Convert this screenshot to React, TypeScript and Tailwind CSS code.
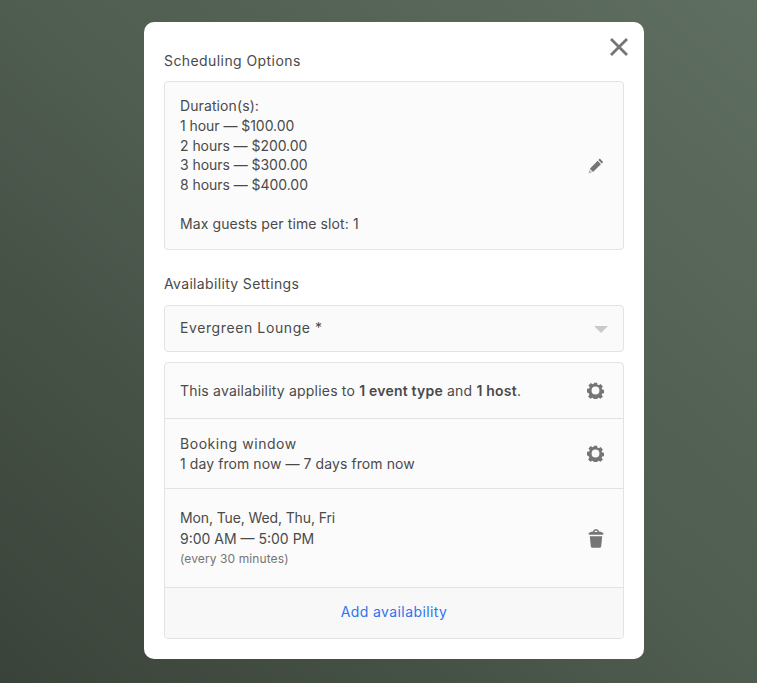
const font = { fontFamily: '"Inter", "Liberation Sans", sans-serif' };

function Gear() {
  return (
    <svg viewBox="-1 -1 26 26" className="w-[17px] h-[17px] text-[#757575]" fill="currentColor">
      <path
        fillRule="evenodd"
        d="M9.500 0h5l.6 3.300 1.900.8 2.800-1.900 3.500 3.500-1.900 2.800.8 1.900 3.300.6v5l-3.300.6-.8 1.900 1.900 2.800-3.500 3.500-2.800-1.900-1.900.8-.6 3.300h-5l-.6-3.300-1.900-.8-2.800 1.900-3.500-3.500 1.900-2.800-.8-1.900L-1 14.500v-5l3.300-.6.8-1.900-1.900-2.800 3.500-3.500 2.800 1.900 1.900-.8L9.500 0zM12 6a6 6 0 1 0 0 12 6 6 0 0 0 0-12z"
      />
    </svg>
  );
}

function Pencil() {
  return (
    <svg viewBox="0 0 16 16" className="w-4 h-4 text-[#757575]" fill="currentColor">
      <path d="M11.800 0.600 15.200 3.900 13.700 5.400 10.400 2z" />
      <path d="M9.700 2.800 12.900 6.200 5 14 1.800 10.800z" />
      <path d="M1.300 11.600 4.200 14.600 0.500 15.600z" fill="#bdbdbd" />
    </svg>
  );
}

function Trash() {
  return (
    <svg viewBox="0 0 16 19" className="w-4 h-[19px] text-[#757575]" fill="currentColor">
      <path d="M0.500 4.800C0.500 3.500 3 2.700 5 2.400 5.400 0.900 6.500 0.300 8 0.300s2.600.6 3 2.100c2 .3 4.500 1.100 4.500 2.400 0 .6-.5 .9-1 .9H1.500c-.5 0-1-.3-1-.9z" />
      <path d="M6 3 8 1.600 10 3z" fill="#fff" />
      <path d="M1.800 7.200h12.400l-1 10c-.1 1-1.200 1.600-2.300 1.600H5.100c-1.100 0-2.200-.6-2.300-1.600z" />
    </svg>
  );
}

function Row({ children, icon, className }: { children: React.ReactNode; icon: React.ReactNode; className: string }) {
  return (
    <div className={`flex items-center justify-between pl-[15px] border-b border-[#e3e3e3] ${className}`}>
      <div>{children}</div>
      {icon}
    </div>
  );
}

export default function App() {
  return (
    <div
      style={font}
      className="w-[757px] h-[683px] overflow-hidden flex pl-[144px] pt-[22px] bg-gradient-to-tr from-[#3a4339] via-[#4f5c50] to-[#5e6e60] text-[14px] text-[#4a4a4a]"
    >
      <div className="relative w-[500px] h-[637px] bg-white rounded-[10px] px-5 pt-[29px]">
        <button className="absolute top-[16px] right-[16px] text-[#757575]">
          <svg viewBox="0 0 18 18" className="w-[18px] h-[18px] block" fill="none" stroke="currentColor" strokeWidth="2.800">
            <path d="M1 1l16 16M17 1L1 17" />
          </svg>
        </button>

        <h2 className="text-[14px] leading-[20px] font-normal tracking-[0.42px]">Scheduling Options</h2>

        <div className="mt-[10px] h-[169px] bg-[#fbfbfb] border border-[#e3e3e3] rounded-[4px] flex items-center justify-between pl-[15px] pr-[19px] leading-[19.600px]">
          <div className="-mt-[1px]">
            <div className="tracking-[0.1px]">Duration(s):</div>
            <div className="tracking-[-0.05px]">1 hour — $100.00</div>
            <div className="tracking-[-0.05px]">2 hours — $200.00</div>
            <div className="tracking-[-0.05px]">3 hours — $300.00</div>
            <div className="tracking-[-0.05px]">8 hours — $400.00</div>
            <div className="mt-[19.600px] tracking-[0.1px]">Max guests per time slot: 1</div>
          </div>
          <Pencil />
        </div>

        <h2 className="mt-6 text-[14px] leading-[20px] font-normal tracking-[0.34px]">Availability Settings</h2>

        <div className="mt-[11px] h-[47px] bg-[#fafafa] border border-[#e3e3e3] rounded-[4px] flex items-center justify-between px-[15px]">
          <span className="tracking-[0.6px] -mt-[2px]">Evergreen Lounge *</span>
          <span className="w-0 h-0 border-x-[7px] border-x-transparent border-t-[7px] border-t-[#c9c9c9] mt-[2px]" />
        </div>

        <div className="mt-[10px] bg-[#fbfbfb] border border-[#e3e3e3] rounded-[4px] overflow-hidden">
          <Row className="h-[56px] pr-[19px]" icon={<Gear />}>
            <span className="tracking-[0.2px] -mt-[1px] block">
              This availability applies to <b className="font-semibold">1 event type</b> and{" "}
              <b className="font-semibold">1 host</b>.
            </span>
          </Row>
          <Row className="h-[70px] leading-[20px] pr-[19px]" icon={<Gear />}>
            <div className="tracking-[0.55px]">Booking window</div>
            <div className="tracking-[0.08px]">1 day from now — 7 days from now</div>
          </Row>
          <Row className="h-[99px] pr-[19px]" icon={<Trash />}>
            <div className="leading-[21px] tracking-[-0.12px]">Mon, Tue, Wed, Thu, Fri</div>
            <div className="leading-[21px]">9:00 AM — 5:00 PM</div>
            <div className="text-[12px] leading-[20px] text-[#757575] tracking-[0.1px]">(every 30 minutes)</div>
          </Row>
          <div className="h-[50px] pb-[3px] bg-[#f8f8f8] flex items-center justify-center text-[#2f74ee] tracking-[0.4px]">
            Add availability
          </div>
        </div>
      </div>
    </div>
  );
}
